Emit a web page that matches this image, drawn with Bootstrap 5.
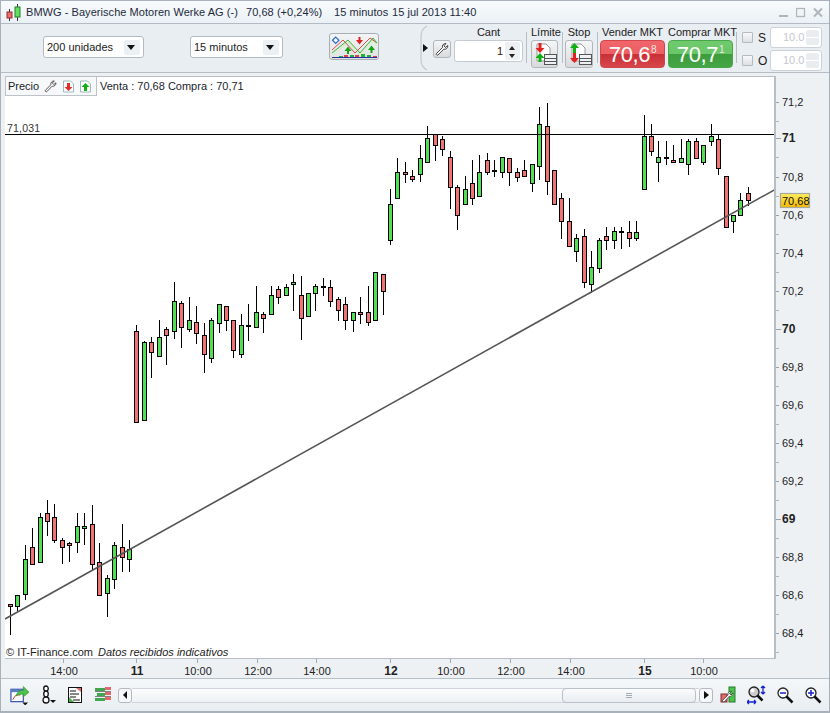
<!DOCTYPE html>
<html lang="es">
<head>
<meta charset="utf-8">
<title>BMWG</title>
<link href="https://cdn.jsdelivr.net/npm/bootstrap@5.3.0/dist/css/bootstrap.min.css" rel="stylesheet">
<style>
html,body{margin:0;height:713px;overflow:hidden}
body{font-family:"Liberation Sans",Arial,sans-serif;font-size:11px;color:#1c1c1c;background:#dfe6ec}
.win{width:830px;height:713px;border:1px solid #a9b2ba;border-bottom-width:2px;display:flex;flex-direction:column;background:#e9eef2}
.titlebar{height:23px;flex:none;background:linear-gradient(#f8fbfd,#eaf0f5);border-bottom:1px solid #b4bcc3;padding-left:5px;color:#1e2a3c;white-space:nowrap;letter-spacing:.05px}
.titlebar svg{flex:none;margin-right:4px}
.tb-a{width:220px}.tb-b{width:88px}.tb-c{width:58px}.tb-d{width:130px}
.winbtns{margin-left:auto;padding-right:6px;gap:7px}
.winbtns svg{margin:0}
.toolbar{height:49px;flex:none;border-bottom:1px solid #b6bdc4;background:#e9eef2}
.ddl{height:22px;background:#fff;border:1px solid #b3bac1;border-radius:3px;padding-left:3px;color:#222;margin-top:-2px}
.ddl-a{width:101px;margin-left:42px}
.ddl-b{width:93px;margin-left:46px}
.ddl i{margin-left:auto;margin-right:3px;width:16px;height:15px;background:#eaf0f4;border-radius:2px;position:relative;display:block}
.ddl i::after{content:"";position:absolute;left:3px;top:5px;border:4px solid transparent;border-top:5px solid #111;border-bottom:0}
.ibtn{background:linear-gradient(#f5f6f7,#d8dadc);border:1px solid #b1b6ba;border-radius:3px}
.ibtn-strat{width:50px;height:27px;margin-left:46px;margin-bottom:3px;background:linear-gradient(#f3f4f5,#dfe1e3);border-color:#a9aeb2}
.bracket{margin-left:41px;width:8px;height:46px;flex:none}
.arrow-r{width:0;height:0;border:4px solid transparent;border-left:5px solid #111;border-right:0;margin-left:-5px;flex:none}
.ibtn-wr{width:18px;height:18px;margin-left:5px;align-self:flex-start;margin-top:16px;flex:none}
.colm{align-self:flex-start;flex:none}
.qtycol{width:69px;margin-left:3px}
.hdr{line-height:16px;height:16px;text-align:center;color:#222;white-space:nowrap}
.qty{height:22px;background:#fff;border:1px solid #c5cbd1;border-radius:3px;text-align:right;padding:3px 19px 0 0;position:relative;line-height:14px;color:#311}
.spin{position:absolute;right:2px;top:1px;width:15px;height:18px;background:#edf1f4;border-radius:2px}
.spin::before,.spin::after{content:"";position:absolute;left:4px;border-style:solid;border-color:transparent;border-width:0 3.500px}
.spin::before{top:4px;border-bottom:4px solid #222}
.spin::after{bottom:2px;border-top:4px solid #222}
.sep{width:1px;height:31px;background:#b6bdc4;margin-top:8px;flex:none;align-self:flex-start}
.m3{margin-left:3px}.m4{margin-left:4px}
.ordcol{width:28px}
.ord-a{width:27px;margin-left:4px}
.ord-b{margin-left:2px}
.ibtn-ord{height:28px;display:block;padding:0}
.trade{width:65px}
.t-a{margin-left:2px}.t-b{margin-left:3px}
.price{height:28px;border-radius:4px;color:#fff;font-size:22px;line-height:27px;text-align:center;white-space:nowrap;letter-spacing:-.4px}
.price sup{font-size:10px;top:-.9em;line-height:0;position:relative;vertical-align:baseline;color:#f3e4e4;margin-left:1px}
.p-red{background:linear-gradient(#f0666a 0,#ec5f63 50%,#c83037 51%,#d8454a 100%);border:1px solid #d0464b}
.p-green{background:linear-gradient(#6fca6e 0,#69c768 50%,#3d9c3d 51%,#46a646 100%);border:1px solid #4aa64a}
.side{width:80px;margin-left:5px;flex:none;row-gap:2px;align-self:flex-start;margin-top:3px}
.sr{height:21px}
.cbx{width:11px;height:11px;border:1px solid #b4bac0;background:linear-gradient(#f7f8f9,#dde0e3);flex:none;border-radius:1px}
.sl{width:17px;padding-left:5px;flex:none;font-size:12px}
.dis{width:52px;height:21px;background:#fff;border:1px solid #ccd2d8;border-radius:3px;color:#c4c8cc;line-height:19px;padding-left:12px;position:relative}
.dis::after{content:"";position:absolute;right:2px;top:2px;width:13px;height:15px;background:linear-gradient(#e9edf0 0 47%,#fff 47% 53%,#e9edf0 53%);border-radius:2px}
.chartrow{flex:none;height:605px;padding-top:3px;background:#eef1f4;display:flex;flex-direction:column}
.plotrow{height:583px;display:flex;padding-left:4px;flex:none}
.plot{width:770px;height:583px;background:#fff;border:1px solid #b7bec5;border-width:1px 1px 1px 0;position:relative;flex:none}
#plot{display:block}
.legend{position:absolute;left:0;top:0;height:19px;display:flex;align-items:center;white-space:nowrap;color:#20242c}
.legbox{height:19px;width:92px;padding-left:2px;border:1px solid #bdc3c9;border-width:0 1px 1px 1px;background:#f6f8fa;display:flex;align-items:center;margin-right:3px}
.legbox svg{flex:none}
.ml-5{margin-left:5px}
.axisr{width:54px;height:583px;display:block;flex:none}
.axisb{width:830px;height:19px;display:block;flex:none}
.botbar{height:33px;flex:none;background:linear-gradient(#f4f7f9,#e9eef2);border-top:1px solid #b8c0c7;padding-left:9px}
.ic{flex:none;display:block}
.ml-7{margin-left:7px}.ml-9{margin-left:9px}.ml-10{margin-left:10px}.ml-11{margin-left:11px}.ml-12{margin-left:12px}
.scroll{width:595px;height:15px;margin-left:6px;flex:none}
.sbtn{width:14px;height:15px;background:#f6f8f9;border:1px solid #b3bac1;border-radius:3px;flex:none;display:flex;align-items:center;justify-content:center}
.tri-l{border:4px solid transparent;border-right:4px solid #111;border-left:0}
.tri-r{border:4px solid transparent;border-left:5px solid #111;border-right:0}
.trk{flex:1;height:15px;background:linear-gradient(#fbfcfd,#eef2f5);border:1px solid #cfd5da;border-width:1px 0;position:relative}
.thumb{position:absolute;right:3px;top:-1px;width:134px;height:15px;background:linear-gradient(#fbfcfd,#e8edf1);border:1px solid #b9c0c6;border-radius:4px;display:flex;align-items:center;justify-content:center}
.grip{width:6px;height:5px;border-top:1px solid #a4abb1;border-bottom:1px solid #a4abb1;position:relative}
.grip::after{content:"";position:absolute;left:0;right:0;top:1px;height:1px;background:#a4abb1}
text{font-family:"Liberation Sans",Arial,sans-serif}
</style>
</head>
<body>
<div class="win">
  <div class="titlebar d-flex align-items-center">
    <svg width="16" height="17" viewBox="0 0 16 17"><path d="M3.500 5v12M11.500 0v17" stroke="#333"/><rect x="1" y="8" width="5" height="6" fill="#ef6a6a" stroke="#8a3030"/><rect x="9" y="3" width="5" height="10" fill="#5fe05f" stroke="#2c7a2c"/></svg>
    <span class="tb-a">BMWG - Bayerische Motoren Werke AG (-)</span>
    <span class="tb-b">70,68 (+0,24%)</span>
    <span class="tb-c">15 minutos</span>
    <span class="tb-d">15 jul 2013 11:40</span>
    <div class="winbtns d-flex align-items-center">
      <svg width="10" height="11" viewBox="0 0 10 11"><rect y="8" width="9" height="2" fill="#aeb5bb"/></svg>
      <svg width="10" height="11" viewBox="0 0 10 11"><rect x=".5" y="1.500" width="8" height="8" fill="none" stroke="#aeb5bb" stroke-width="1.300"/></svg>
      <svg width="10" height="11" viewBox="0 0 10 11"><path d="M1 1.500l8 8M9 1.500l-8 8" stroke="#aeb5bb" stroke-width="2"/></svg>
    </div>
  </div>
  <div class="toolbar d-flex align-items-center">
    <div class="ddl ddl-a d-flex align-items-center">200 unidades<i></i></div>
    <div class="ddl ddl-b d-flex align-items-center">15 minutos<i></i></div>
    <div class="ibtn ibtn-strat d-flex align-items-center justify-content-center">
      <svg width="48" height="25" viewBox="0 0 48 25">
        <path d="M2 19L18 6 30 19 43 4 47 9V13L43 8 30 22 18 10 2 22z" fill="#d8efd2"/>
        <path d="M2 16L13 6 25 19 40 4 47 9" fill="none" stroke="#d94a4a"/>
        <path d="M2 19L18 6 30 19 43 4 47 9" fill="none" stroke="#40b040"/>
        <rect x="3.500" y="4" width="4.500" height="4.500" fill="#fff" stroke="#2f6ed0" stroke-width="1.300" transform="rotate(45 5.700 6.200)"/>
        <path d="M17 20v-3h-2.500l3.500-4.500 3.500 4.500H19v3zM40.500 19v-3H38l3.500-4.500L45 16h-2.500v3z" fill="#13a513"/>
        <path d="M28.500 3v3H26l3.500 4.500L33 6h-2.500V3z" fill="#e02020"/>
        <path d="M9 23v-1h4v1zM20 23v-2h4v2zM31 23v-3h4v3zM37 23v-2h4v2z" fill="#25b03a"/>
        <path d="M14 23v-2h4v2zM25 23v-2h4v2zM43 23v-1h4v1z" fill="#e04050"/>
        <path d="M2 23.500h45" stroke="#2030a0"/>
      </svg>
    </div>
    <svg class="bracket" viewBox="0 0 8 46"><path d="M7 1Q1 4 1 12V34Q1 42 7 45" fill="none" stroke="#c3c9ce" stroke-width="1.200"/></svg>
    <span class="arrow-r"></span>
    <div class="ibtn ibtn-wr d-flex align-items-center justify-content-center">
      <svg width="15" height="15" viewBox="0 0 15 15"><path d="M1.500 11.500l6-6c-.7-2 .8-4 3.500-4l-2 2.300 1.500 1.700 2.300-2c.2 2.600-2 4.300-4 3.600l-5.800 5.900c-.7.700-2.400-.6-1.500-1.500z" fill="#fff" stroke="#333" stroke-width=".9"/></svg>
    </div>
    <div class="colm qtycol">
      <div class="hdr">Cant</div>
      <div class="qty">1<span class="spin"></span></div>
    </div>
    <span class="sep m3"></span>
    <div class="colm ordcol ord-a">
      <div class="hdr">Límite</div>
      <div class="ibtn ibtn-ord">
        <svg width="25" height="26" viewBox="0 0 25 26"><path d="M5 3h9l4 4v13H5z" fill="#fff" stroke="#999"/><path d="M6.500 2h3v5h3l-4.500 5-4.500-5h3z" fill="#e52020"/><path d="M6.500 21h3v-4h3l-4.500-5-4.500 5h3z" fill="#10b010"/><rect x="12.500" y="13.500" width="12" height="10" fill="#eef1f3" stroke="#555"/><path d="M13 17.500h11M13 20.500h11" stroke="#555"/></svg>
      </div>
    </div>
    <span class="sep m4"></span>
    <div class="colm ordcol ord-b">
      <div class="hdr">Stop</div>
      <div class="ibtn ibtn-ord">
        <svg width="26" height="26" viewBox="0 0 26 26"><path d="M6 3h9l4 4v13H6z" fill="#fff" stroke="#999"/><path d="M7 12h3V7h3L8.500 2 4 7h3z" fill="#10b010"/><path d="M7 12h3v5h3l-4.500 5L4 17h3z" fill="#e52020"/><rect x="13.500" y="13.500" width="12" height="10" fill="#eef1f3" stroke="#555"/><path d="M14 17.500h11M14 20.500h11" stroke="#555"/></svg>
      </div>
    </div>
    <span class="sep m4"></span>
    <div class="colm trade t-a">
      <div class="hdr">Vender MKT</div>
      <div class="price p-red">70,6<sup>8</sup></div>
    </div>
    <div class="colm trade t-b">
      <div class="hdr">Comprar MKT</div>
      <div class="price p-green">70,7<sup>1</sup></div>
    </div>
    <span class="sep m3"></span>
    <div class="side d-flex flex-column">
      <div class="sr d-flex align-items-center"><span class="cbx"></span><span class="sl">S</span><span class="dis">10.0</span></div>
      <div class="sr d-flex align-items-center"><span class="cbx"></span><span class="sl">O</span><span class="dis">10.0</span></div>
    </div>
  </div>
  <div class="chartrow">
    <div class="plotrow">
      <div class="plot">
        <svg id="plot" width="769" height="581" viewBox="5 77 769 581"></svg>
        <div class="legend">
          <div class="legbox">Precio
            <svg class="ml-5" width="14" height="15" viewBox="0 0 15 15"><path d="M1.500 11.500l6-6c-.7-2 .8-4 3.500-4l-2 2.300 1.500 1.700 2.300-2c.2 2.600-2 4.300-4 3.600l-5.800 5.900c-.7.700-2.400-.6-1.500-1.500z" fill="#fff" stroke="#333" stroke-width=".9"/></svg>
            <svg class="ms-1" width="13" height="13" viewBox="0 0 13 13"><path d="M1.500 1h7l3 3v8h-10z" fill="#fff" stroke="#9bb"/><path d="M5 3h3v4h2.500l-4 4-4-4H5z" fill="#e52a2a"/></svg>
            <svg class="ms-1" width="13" height="13" viewBox="0 0 13 13"><path d="M1.500 1h7l3 3v8h-10z" fill="#fff" stroke="#9bb"/><path d="M5 11h3V7h2.500l-4-4-4 4H5z" fill="#15b015"/></svg>
          </div>
          Venta : 70,68 Compra : 70,71
        </div>
      </div>
      <svg class="axisr" id="axr" viewBox="0 0 54 583"></svg>
    </div>
    <svg class="axisb" id="axb" viewBox="0 0 830 19"></svg>
  </div>
  <div class="botbar d-flex align-items-center">
    <svg class="ic" width="19" height="20" viewBox="0 0 20 20"><rect x="1" y="4" width="13" height="13" fill="#fff" stroke="#3656a8" stroke-width="1.300"/><rect x="1" y="4" width="13" height="3" fill="#5a7dc8"/><path d="M3 15q2-6 8-5" fill="none" stroke="#d03030"/><path d="M6 11q3-7 8-6V1l6 6-6 5V9q-5 0-8 2z" fill="#4cc24c" stroke="#2a8a2a" stroke-width=".6"/><path d="M13 18h6l-3 3z" fill="#111"/></svg>
    <svg class="ic ml-12" width="15" height="20" viewBox="0 0 15 20"><path d="M5 1C2 1 2 6 5 6S8 1 5 1zM5 6C2 6 2 12 5 12S8 6 5 6zM5 12C1 12 1 18 5 18S9 12 5 12z" fill="#fff" stroke="#111" stroke-width="1.300"/><path d="M9 15h6l-3 3z" fill="#111"/></svg>
    <svg class="ic ml-12" width="15" height="17" viewBox="0 0 15 17"><rect x=".5" y=".5" width="13" height="15" fill="#fff" stroke="#111"/><path d="M2 4h6M2 7h9M2 10h6M5 13h7" stroke="#111"/><path d="M8 1h5v4z" fill="#e06a6a"/><path d="M1 15v-5l5 5z" fill="#44b544"/></svg>
    <svg class="ic ml-11" width="18" height="18" viewBox="0 0 18 18"><path d="M1 2h10v3H1zM1 12h10v3H1zM3 7h8v3H3z" fill="#3fa84f"/><path d="M11 1h6v3h-6zM11 6h6v3h-6zM11 11h6v3h-6z" fill="#e2686e"/><path d="M1 5.500h16M1 10.500h16" stroke="#333" stroke-width=".6"/></svg>
    <div class="scroll d-flex align-items-center">
      <div class="sbtn"><span class="tri-l"></span></div>
      <div class="trk"><div class="thumb"><span class="grip"></span></div></div>
      <div class="sbtn"><span class="tri-r"></span></div>
    </div>
    <svg class="ic ml-7" width="16" height="18" viewBox="0 0 16 18"><rect x="9" y="1" width="6" height="15" fill="#4cc24c" stroke="#2a7a2a"/><rect x="1" y="8" width="6" height="8" fill="#e06a6a" stroke="#803030"/><path d="M2 15l6-6c-.5-2 1-4 3.500-3.500L9.500 7.500 11 9l2-2c.3 2.500-2 3.800-3.800 3.300L4 16z" fill="#fff" stroke="#333" stroke-width=".7"/></svg>
    <svg class="ic ml-11" width="20" height="20" viewBox="0 0 20 20"><circle cx="7" cy="7" r="5" fill="#ccc" stroke="#222" stroke-width="1.300"/><circle cx="5.500" cy="5.500" r="2" fill="#fff"/><path d="M10.500 10.500l5 5" stroke="#111" stroke-width="2.500"/><path d="M16 1v8M16 1l-2 2M16 1l2 2M16 9l-2-2M16 9l2-2M0 17h9M0 17l2-2M0 17l2 2M9 17l-2-2M9 17l-2 2" stroke="#1525d0" stroke-width="1.300" fill="none"/></svg>
    <svg class="ic ml-9" width="18" height="18" viewBox="0 0 18 18"><circle cx="7" cy="7" r="5" fill="#fff" stroke="#222" stroke-width="1.300"/><path d="M4 7h6" stroke="#1525d0" stroke-width="1.500"/><path d="M10.500 10.500l6 6" stroke="#111" stroke-width="2.500"/></svg>
    <svg class="ic ml-10" width="18" height="18" viewBox="0 0 18 18"><circle cx="7" cy="7" r="5" fill="#fff" stroke="#222" stroke-width="1.300"/><path d="M4 7h6M7 4v6" stroke="#1525d0" stroke-width="1.500"/><path d="M10.500 10.500l6 6" stroke="#111" stroke-width="2.500"/></svg>
  </div>
</div>
<script>
// x, wickTop, wickBot, bodyTop, bodyBot, colour (r red, g green, k doji)
const C=[[10,605,634,604,606,'r'],[17,595,610,595,606,'g'],[25,545,599,559,594,'g'],[32,528,564,547,564,'r'],[40,513,562,517,562,'g'],[47,500,535,513,521,'r'],[54,504,542,517,540,'r'],[62,538,563,540,547,'r'],[69,542,561,543,545,'r'],[77,513,552,526,542,'g'],[84,513,544,526,528,'g'],[92,505,570,524,564,'r'],[99,543,595,562,595,'r'],[107,575,616,578,593,'g'],[114,542,588,545,579,'g'],[122,524,571,547,557,'r'],[129,540,571,549,559,'g'],
[136,325,422,331,422,'r'],[144,341,420,342,420,'g'],[151,337,377,342,352,'r'],[159,320,356,337,356,'g'],[166,327,364,329,335,'r'],[174,282,338,301,331,'g'],[181,301,347,303,327,'r'],[189,297,331,320,329,'g'],[196,306,343,322,333,'r'],[204,323,372,335,354,'r'],[211,318,362,320,358,'g'],[219,304,332,304,323,'g'],[226,306,330,306,320,'r'],[233,320,357,320,350,'r'],[241,314,357,325,354,'g'],[248,304,340,325,325,'k'],
[256,286,327,312,327,'g'],[263,312,332,314,318,'r'],[271,286,314,295,314,'g'],[278,286,303,289,297,'r'],[286,284,295,287,295,'g'],[293,274,310,282,284,'g'],[301,276,339,295,318,'r'],[308,293,316,293,316,'g'],[315,284,310,286,293,'g'],[323,278,295,286,287,'k'],[330,280,306,287,301,'r'],[338,297,320,299,310,'r'],[345,297,329,304,320,'r'],[353,312,331,312,320,'g'],[360,297,323,312,314,'r'],[368,286,325,312,322,'r'],[375,272,320,272,320,'g'],[383,274,314,274,291,'r'],
[390,189,244,204,240,'g'],[397,158,198,172,198,'g'],[405,162,182,172,174,'r'],[412,170,181,176,179,'r'],[420,145,181,158,174,'g'],[427,126,162,138,162,'g'],[435,134,160,134,145,'r'],[442,136,155,139,149,'r'],[450,151,208,157,187,'r'],[457,185,229,187,215,'r'],[465,176,204,189,204,'g'],[472,160,204,183,198,'r'],[479,155,196,172,196,'g'],[487,153,174,160,172,'r'],[494,160,176,170,170,'k'],[502,157,177,157,172,'g'],[509,158,185,158,172,'r'],
[517,168,181,172,177,'r'],[524,160,176,170,176,'r'],[532,164,191,164,183,'g'],[539,107,179,124,166,'g'],[547,103,194,126,181,'r'],[554,170,204,170,204,'r'],[561,193,238,198,221,'r'],[569,198,246,221,246,'r'],[576,234,261,238,251,'g'],[584,229,287,236,282,'r'],[591,251,292,267,284,'g'],[599,238,272,240,268,'g'],[606,227,249,236,240,'r'],[614,227,248,231,240,'g'],[621,227,248,231,231,'k'],[629,221,246,232,238,'r'],[636,221,240,232,238,'g'],
[644,115,189,136,189,'g'],[651,124,155,136,151,'r'],[658,141,181,157,162,'g'],[666,141,164,157,157,'k'],[673,145,162,160,162,'r'],[681,139,162,158,162,'g'],[688,139,174,141,164,'g'],[696,138,158,141,158,'r'],[703,145,164,145,162,'g'],[711,124,145,136,141,'g'],[718,134,174,139,168,'r'],[726,176,227,176,227,'r'],[733,215,232,215,221,'g'],[740,193,215,200,215,'g'],[748,187,205,193,200,'r']];
const FILL={r:'#f07272',g:'#52e052'};
let s='';
C.forEach(([x,a,b,t,u,c])=>{
  s+=`<rect x="${x}" y="${a}" width="1" height="${b-a+1}" fill="#000"/>`;
  if(c==='k'||t===u){s+=`<rect x="${x-2}" y="${t}" width="5" height="2" fill="#000"/>`;}
  else{s+=`<rect x="${x-1.5}" y="${t+.5}" width="4" height="${u-t}" fill="${FILL[c]}" stroke="#000"/>`;}
});
s+='<line x1="5" y1="134.500" x2="776" y2="134.500" stroke="#000"/>';
s+='<text x="7" y="132" font-size="10.500" fill="#333" letter-spacing=".2">71,031</text>';
s+='<line x1="5" y1="619" x2="776" y2="189" stroke="#555" stroke-width="1.600"/>';
s+='<text x="6" y="656" font-size="11" fill="#222">© IT-Finance.com <tspan font-style="italic" dx="2">Datos recibidos indicativos</tspan></text>';
document.getElementById('plot').innerHTML=s;
// right axis: y relative to y=76
let r='<rect x="0" y="0" width="1" height="583" fill="#b7bec5"/>';
const L=[['71,2',102,0],['71',138,1],['70,8',177,0],['70,6',215,0],['70,4',253,0],['70,2',291,0],['70',329,1],['69,8',367,0],['69,6',405,0],['69,4',443,0],['69,2',481,0],['69',519,1],['68,8',557,0],['68,6',595,0],['68,4',633,0]];
L.forEach(([t,y,b])=>{const Y=y-76;
 r+=`<rect x="1" y="${Y}" width="${b?5:3}" height="1" fill="#9aa3ab"/>`;
 r+=`<text x="7" y="${Y+4}" font-size="${b?12:11}" ${b?'font-weight="bold"':''} fill="#222">${t}</text>`;
 const m=Y+19; if(m<583) r+=`<rect x="1" y="${m}" width="3" height="1" fill="#b0b7be"/>`;
});
r+='<defs><linearGradient id="gy" x1="0" y1="0" x2="0" y2="1"><stop offset="0" stop-color="#ffee60"/><stop offset="1" stop-color="#f5b800"/></linearGradient></defs>';
r+='<rect x="5.500" y="117.500" width="29" height="14" fill="url(#gy)" stroke="#a8a8a0" stroke-width="1.200"/><text x="7" y="128.500" font-size="11" fill="#111">70,68</text>';
document.getElementById('axr').innerHTML=r;
// bottom axis
let b='';
[['14:00',63,0],['11',136,1],['10:00',197,0],['12:00',257,0],['14:00',316,0],['12',390,1],['10:00',450,0],['12:00',510,0],['14:00',570,0],['15',644,1],['10:00',703,0]].forEach(([t,x,bd])=>{
 b+=`<rect x="${x-1}" y="0" width="1" height="4" fill="#a4acb3"/>`;
 b+=`<text x="${x}" y="16" text-anchor="middle" font-size="${bd?12:11}" ${bd?'font-weight="bold"':''} fill="#222">${t}</text>`;
});
document.getElementById('axb').innerHTML=b;
</script>
<script src="https://cdn.jsdelivr.net/npm/bootstrap@5.3.0/dist/js/bootstrap.bundle.min.js"></script>
</body>
</html>
